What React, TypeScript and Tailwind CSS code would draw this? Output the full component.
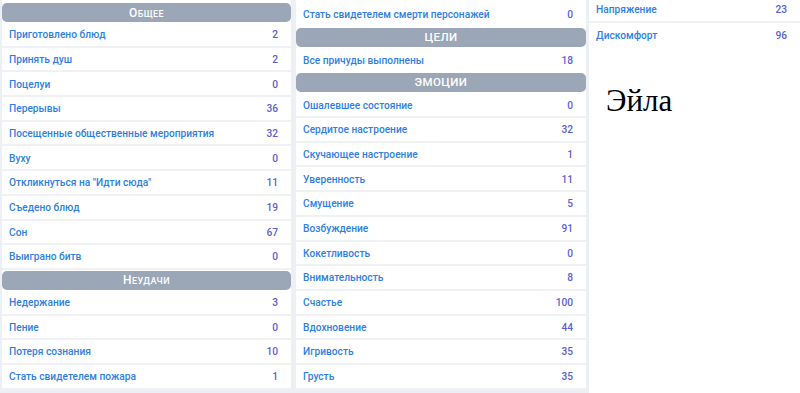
type Row = [string, number];

const general: Row[] = [
  ['Приготовлено блюд', 2],
  ['Принять душ', 2],
  ['Поцелуи', 0],
  ['Перерывы', 36],
  ['Посещенные общественные мероприятия', 32],
  ['Вуху', 0],
  ['Откликнуться на "Идти сюда"', 11],
  ['Съедено блюд', 19],
  ['Сон', 67],
  ['Выиграно битв', 0],
];

const failures: Row[] = [
  ['Недержание', 3],
  ['Пение', 0],
  ['Потеря сознания', 10],
  ['Стать свидетелем пожара', 1],
];

const emotions: Row[] = [
  ['Ошалевшее состояние', 0],
  ['Сердитое настроение', 32],
  ['Скучающее настроение', 1],
  ['Уверенность', 11],
  ['Смущение', 5],
  ['Возбуждение', 91],
  ['Кокетливость', 0],
  ['Внимательность', 8],
  ['Счастье', 100],
  ['Вдохновение', 44],
  ['Игривость', 35],
  ['Грусть', 35],
];

const extra: Row[] = [
  ['Напряжение', 23],
  ['Дискомфорт', 96],
];

const font = { fontFamily: 'Roboto, "Noto Sans", sans-serif' };

// small caps drawn by hand: the font has no Cyrillic small-cap glyphs
const Header = ({ title, smallCaps }: { title: string; smallCaps?: boolean }) => (
  <div className="my-[1px] flex h-[19px] shrink-0 items-center justify-center rounded-[5px] bg-[#9ba6b7] font-medium tracking-wide text-white">
    {smallCaps ? (
      <span className="flex items-baseline">
        <span className="text-[12px]">{title[0]}</span>
        <span className="text-[9px] uppercase">{title.slice(1)}</span>
      </span>
    ) : (
      <span className="text-[11.5px] uppercase">{title}</span>
    )}
  </div>
);

const StatRow = ({ label, value, last }: { label: string; value: number; last?: boolean }) => (
  <div
    className={
      'flex h-[24.7px] shrink-0 items-center justify-between bg-white pt-[1px] pr-[13px] pl-[7px] text-[10.2px] font-medium ' +
      (last ? '' : 'border-b-2 border-[#eff1f5]')
    }
  >
    <span className="text-[#2f7fe2]">{label}</span>
    <span className="text-[#5a5fd2]">{value}</span>
  </div>
);

export default function App() {
  return (
    <div className="flex h-[393px] w-[800px] overflow-hidden bg-[#eceff3]" style={font}>
      {/* Column 1 */}
      <div className="ml-[2px] flex h-[388px] w-[289px] flex-col bg-white pt-[2px]">
        <Header title="Общее" smallCaps />
        {general.map(([l, v]) => (
          <StatRow key={l} label={l} value={v} />
        ))}
        <Header title="Неудачи" smallCaps />
        {failures.map(([l, v]) => (
          <StatRow key={l} label={l} value={v} />
        ))}
      </div>

      {/* Column 2 */}
      <div className="ml-[5px] flex h-[388px] w-[290px] flex-col bg-white pt-[2px]">
        <StatRow label="Стать свидетелем смерти персонажей" value={0} last />
        <Header title="Цели" />
        <StatRow label="Все причуды выполнены" value={18} last />
        <Header title="Эмоции" />
        {emotions.map(([l, v]) => (
          <StatRow key={l} label={l} value={v} />
        ))}
      </div>

      {/* Column 3 */}
      <div className="ml-[3px] flex flex-1 flex-col bg-white">
        <div className="-mt-[2px] flex flex-col">
          {extra.map(([l, v], i) => (
            <StatRow key={l} label={l} value={v} last={i === extra.length - 1} />
          ))}
        </div>
        <div
          className="mt-[38px] pl-[17px] text-[31px] leading-none text-black"
          style={{ fontFamily: '"Liberation Serif", serif' }}
        >
          Эйла
        </div>
      </div>
    </div>
  );
}
